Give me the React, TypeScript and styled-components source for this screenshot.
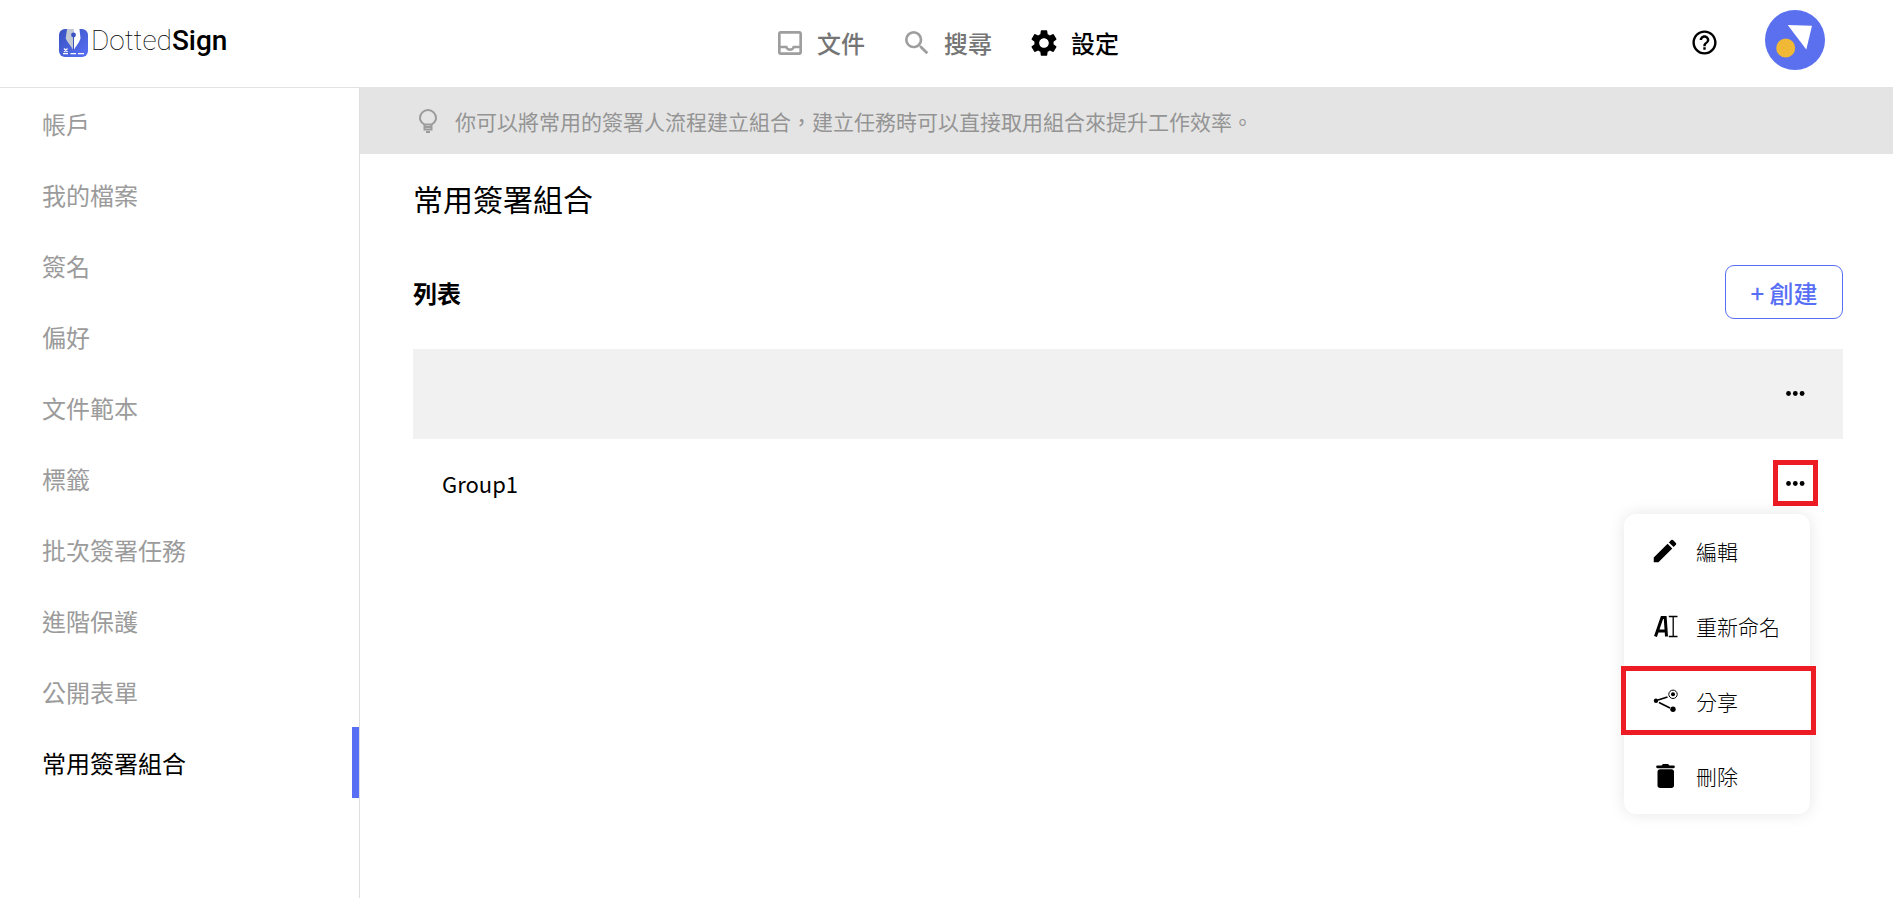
import React from "react";
import styled, { createGlobalStyle } from "styled-components";
import { MdOutlineInbox, MdSearch, MdSettings, MdHelpOutline, MdEdit } from "react-icons/md";

const GlobalStyle = createGlobalStyle`
  *, *::before, *::after { box-sizing: border-box; }
  body {
    margin: 0;
    background: #fff;
    color: #000;
    font-family: "Noto Sans CJK TC", sans-serif;
  }
  button { font-family: inherit; cursor: pointer; }
  svg { display: block; flex: none; }
`;

const Page = styled.div`
  min-height: 100vh;
  display: flex;
  flex-direction: column;
`;

const Header = styled.header`
  height: 88px;
  border-bottom: 1px solid #e3e3e3;
  display: grid;
  grid-template-columns: 1fr auto 1fr;
  align-items: center;
  padding: 0 59px 2px;
  margin-bottom: -1px;
`;

const Logo = styled.a`
  display: flex;
  align-items: center;
  gap: 3px;
  color: #000;
  text-decoration: none;
  font: 100 28px/36px Roboto, sans-serif;
`;

const LogoText = styled.span`
  padding-bottom: 4px;
`;

const LogoStrong = styled.strong`
  font-weight: 500;
`;

const TopNav = styled.nav`
  display: flex;
  gap: 36px;
`;

const TopLink = styled.a<{ $active?: boolean }>`
  display: flex;
  align-items: center;
  gap: 11px;
  font-size: 24px;
  line-height: 36px;
  font-weight: 500;
  text-decoration: none;
  color: ${(p) => (p.$active ? "#000" : "#757575")};
  svg { color: ${(p) => (p.$active ? "#000" : "#9e9e9e")}; }
`;

const HeaderActions = styled.div`
  display: flex;
  justify-content: flex-end;
  align-items: center;
  gap: 46px;
  padding: 0 9px 6px 0;
`;

const IconButton = styled.button`
  border: 0;
  padding: 0;
  background: none;
  color: #000;
`;

const HelpButton = styled(IconButton)`
  padding-top: 6px;
`;

const Body = styled.div`
  flex: 1;
  display: flex;
`;

const Sidebar = styled.nav`
  flex: none;
  width: 360px;
  padding-top: 1px;
  border-right: 1px solid #dedede;
`;

const SideLink = styled.a<{ $active?: boolean }>`
  display: flex;
  align-items: center;
  height: 71px;
  padding-left: 42px;
  font-size: 24px;
  text-decoration: none;
  color: ${(p) => (p.$active ? "#000" : "#9b9b9b")};
  border-right: 7px solid ${(p) => (p.$active ? "#586ff5" : "transparent")};
`;

const Main = styled.main`
  flex: 1;
  min-width: 0;
`;

const Banner = styled.p`
  margin: 0;
  height: 67px;
  padding-left: 59px;
  display: flex;
  align-items: center;
  gap: 18px;
  background: #e4e4e4;
  color: #949494;
  font-size: 21px;
`;

const Content = styled.section`
  padding: 20px 50px 0 53px;
`;

const Title = styled.h1`
  margin: 0;
  font-size: 30px;
  line-height: 48px;
  font-weight: 400;
`;

const ListHead = styled.div`
  display: flex;
  align-items: center;
  justify-content: space-between;
  margin: 43px 0 30px;
`;

const ListTitle = styled.h2`
  margin: 0;
  font-size: 24px;
  font-weight: 700;
`;

const CreateButton = styled.button`
  height: 54px;
  min-width: 118px;
  padding: 0 24px;
  border: 1px solid #586ff5;
  border-radius: 9px;
  background: #fff;
  color: #586ff5;
  font-size: 24px;
  font-weight: 500;
`;

const List = styled.ul`
  list-style: none;
  margin: 0;
  padding: 0;
`;

const Row = styled.li<{ $shaded?: boolean }>`
  position: relative;
  display: flex;
  align-items: center;
  justify-content: space-between;
  height: 90px;
  padding: 0 25px 2px 29px;
  font-size: 22px;
  background: ${(p) => (p.$shaded ? "#f1f1f1" : "#fff")};
`;

const MoreButton = styled.button<{ $marked?: boolean }>`
  width: 45px;
  height: 46px;
  padding: 0;
  display: grid;
  place-items: center;
  background: none;
  color: #000;
  border: 5px solid ${(p) => (p.$marked ? "#ed1c24" : "transparent")};
`;

const Menu = styled.div`
  position: absolute;
  top: 75px;
  right: 33px;
  width: 186px;
  border-radius: 12px;
  background: #fff;
  box-shadow: 0 0 16px rgba(0, 0, 0, 0.1);
`;

const MenuItem = styled.button<{ $marked?: boolean }>`
  position: relative;
  width: 100%;
  height: 75px;
  padding: 0 0 2px 26px;
  display: flex;
  align-items: center;
  gap: 16px;
  border: 0;
  background: none;
  color: #000;
  font-size: 21px;
  font-weight: 300;
  &::after {
    content: "";
    display: ${(p) => (p.$marked ? "block" : "none")};
    position: absolute;
    inset: 2px -6px 4px -3px;
    border: 5px solid #ed1c24;
  }
`;

const LogoMark = () => (
  <svg width="29" height="28" viewBox="0 0 29 28" aria-hidden="true">
    <defs>
      <linearGradient id="mark" x1="0" y1="0" x2="1" y2="1">
        <stop offset="0" stopColor="#3650c0" />
        <stop offset="1" stopColor="#5a70f5" />
      </linearGradient>
    </defs>
    <rect width="29" height="28" rx="6" fill="url(#mark)" />
    <path d="M8 0h6.500v21.500C12 17 8.500 13.500 6.700 9.500Z" fill="#c3c9d2" />
    <path d="M14.500 0H20.500l1 9.500C20 14 17 17 14.500 21.500Z" fill="#fff" />
    <path d="M14.500 6v15" stroke="#3b52c4" strokeWidth="1" />
    <circle cx="14.500" cy="6" r="2.400" fill="#3b52c4" />
    <path d="M5 19.500l3.500 3.500M8.500 19.500l-3.500 3.500M4 24.700h5M11.500 24.700h5.500M19 24.700h6" stroke="#fff" strokeWidth="1.200" />
  </svg>
);

const Avatar = () => (
  <svg width="60" height="60" viewBox="0 0 60 60" aria-hidden="true">
    <circle cx="30" cy="30" r="30" fill="#5a70ee" />
    <path d="M22.700 15l24.300 .8-5.700 23.700z" fill="#fff" />
    <circle cx="20.700" cy="38" r="9.500" fill="#f1b836" />
  </svg>
);

const Bulb = () => (
  <svg width="18" height="24" viewBox="0 0 18 24" fill="none" stroke="#9b9b9b" strokeWidth="2" aria-hidden="true">
    <path d="M5.500 15.500C3 14 1 12 1 9a8 8 0 0 1 16 0c0 3-2 5-4.500 6.500z" strokeLinejoin="round" />
    <path d="M5.500 15v5.500h7V15M5.500 18h7M7 23h4" />
  </svg>
);

const Dots = () => (
  <svg width="19" height="5" viewBox="0 0 19 5" aria-hidden="true">
    <circle cx="2.500" cy="2.500" r="2.400" />
    <circle cx="9.300" cy="2.500" r="2.400" />
    <circle cx="16.100" cy="2.500" r="2.400" />
  </svg>
);

const RenameIcon = () => (
  <svg width="30" height="30" viewBox="0 0 30 30" fill="none" stroke="#000" aria-hidden="true">
    <path d="M5.500 25.500L12 6.500h3.200L16.500 25.500M8 20h8" strokeWidth="3" />
    <path d="M18.800 5.500h8.700M18.800 25.500h8.700M23.200 5.500v20" strokeWidth="1.300" />
  </svg>
);

const ShareIcon = () => (
  <svg width="30" height="30" viewBox="0 0 30 30" aria-hidden="true">
    <path d="M8 14L17.500 11M9 16.500l11 5.500" stroke="#000" strokeWidth="1.700" />
    <circle cx="6" cy="14.700" r="2.200" />
    <circle cx="23" cy="8.300" r="4.200" fill="#fff" stroke="#000" strokeWidth="1" />
    <circle cx="23" cy="8.300" r="2" />
    <circle cx="23" cy="23.300" r="2.700" />
  </svg>
);

const TrashIcon = () => (
  <svg width="30" height="30" viewBox="0 0 30 30" aria-hidden="true">
    <path d="M7.500 4.500h4L13 3h5l1.500 1.500h4a1.200 1.200 0 0 1 0 2.700h-16a1.200 1.200 0 0 1 0-2.700z" />
    <rect x="7.500" y="8.300" width="16.500" height="18.700" rx="2.700" />
  </svg>
);

const sections = ["帳戶", "我的檔案", "簽名", "偏好", "文件範本", "標籤", "批次簽署任務", "進階保護", "公開表單", "常用簽署組合"];

export default function App() {
  return (
    <Page>
      <GlobalStyle />
      <Header>
        <Logo href="#home">
          <LogoMark />
          <LogoText>Dotted<LogoStrong>Sign</LogoStrong></LogoText>
        </Logo>
        <TopNav>
          <TopLink href="#documents"><MdOutlineInbox size={32} />文件</TopLink>
          <TopLink href="#search"><MdSearch size={32} />搜尋</TopLink>
          <TopLink href="#settings" $active><MdSettings size={32} />設定</TopLink>
        </TopNav>
        <HeaderActions>
          <HelpButton type="button" aria-label="說明"><MdHelpOutline size={29} /></HelpButton>
          <IconButton type="button" aria-label="帳戶"><Avatar /></IconButton>
        </HeaderActions>
      </Header>
      <Body>
        <Sidebar>
          {sections.map((name) => (
            <SideLink key={name} href="#section" $active={name === "常用簽署組合"}>{name}</SideLink>
          ))}
        </Sidebar>
        <Main>
          <Banner><Bulb />你可以將常用的簽署人流程建立組合，建立任務時可以直接取用組合來提升工作效率。</Banner>
          <Content>
            <Title>常用簽署組合</Title>
            <ListHead>
              <ListTitle>列表</ListTitle>
              <CreateButton type="button">+ 創建</CreateButton>
            </ListHead>
            <List>
              <Row $shaded>
                <span />
                <MoreButton type="button" aria-label="更多"><Dots /></MoreButton>
              </Row>
              <Row>
                <span>Group1</span>
                <MoreButton type="button" aria-label="更多" $marked><Dots /></MoreButton>
                <Menu>
                  <MenuItem type="button"><MdEdit size={30} />編輯</MenuItem>
                  <MenuItem type="button"><RenameIcon />重新命名</MenuItem>
                  <MenuItem type="button" $marked><ShareIcon />分享</MenuItem>
                  <MenuItem type="button"><TrashIcon />刪除</MenuItem>
                </Menu>
              </Row>
            </List>
          </Content>
        </Main>
      </Body>
    </Page>
  );
}
